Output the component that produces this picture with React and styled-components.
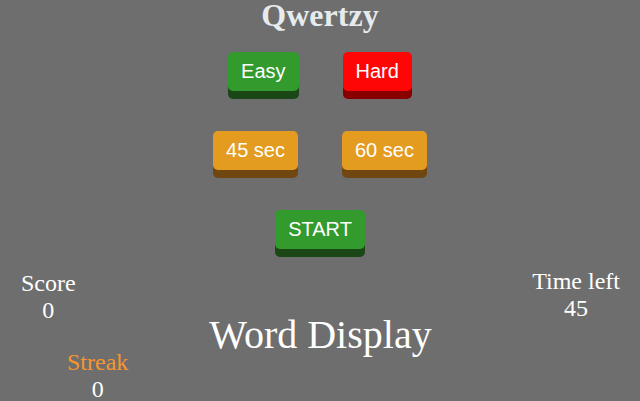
import styled, { createGlobalStyle } from "styled-components";

const GlobalStyle = createGlobalStyle`
  html, body {
    margin: 0;
    padding: 0;
    background-color: #6e6e6e;
  }
  body {
    font-family: "Liberation Serif", "Times New Roman", serif;
    color: #ffffff;
    overflow: hidden;
  }
`;

const Page = styled.div`
  width: 640px;
  height: 401px;
  overflow: hidden;
`;

const Title = styled.h1`
  margin: 0;
  font-size: 32px;
  line-height: 30px;
  font-weight: bold;
  text-align: center;
  color: #e6ebee;
`;

const ButtonRow = styled.div`
  display: flex;
  justify-content: center;
  gap: 44px;
  margin-top: ${(p) => p.$top || 40}px;
`;

const shades = {
  green: ["#339a2d", "#1b4716"],
  red: ["#ff0606", "#880000"],
  orange: ["#e39c1f", "#714711"],
};

const Button = styled.button`
  height: 39px;
  padding: 0 13px;
  border: none;
  border-radius: 5px;
  background-color: ${(p) => shades[p.$color][0]};
  box-shadow: 0 8px 0 ${(p) => shades[p.$color][1]};
  color: #ffffff;
  font-family: "Liberation Sans", Arial, sans-serif;
  font-size: 20px;
  cursor: pointer;
`;

const Board = styled.div`
  display: grid;
  grid-template-columns: 1fr auto 1fr;
  align-items: start;
  margin-top: 19px;
  padding: 0 20px 0 21px;
`;

const LeftColumn = styled.div`
  display: flex;
  flex-direction: column;
  align-items: flex-start;
`;

const Stat = styled.div`
  font-size: 24px;
  text-align: center;
  color: ${(p) => p.$color || "#ffffff"};
  margin-top: ${(p) => p.$top || 0}px;
  margin-left: ${(p) => p.$left || 0}px;
`;

const Value = styled.div`
  color: #ffffff;
`;

const WordDisplay = styled.div`
  font-size: 40px;
  line-height: 46px;
  margin-top: 44px;
  white-space: nowrap;
`;

const RightColumn = styled.div`
  display: flex;
  justify-content: flex-end;
`;

export default function App() {
  return (
    <Page>
      <GlobalStyle />
      <Title>Qwertzy</Title>
      <ButtonRow $top={22}>
        <Button $color="green">Easy</Button>
        <Button $color="red">Hard</Button>
      </ButtonRow>
      <ButtonRow>
        <Button $color="orange">45 sec</Button>
        <Button $color="orange">60 sec</Button>
      </ButtonRow>
      <ButtonRow>
        <Button $color="green">START</Button>
      </ButtonRow>
      <Board>
        <LeftColumn>
          <Stat $top={2}>
            Score
            <Value>0</Value>
          </Stat>
          <Stat $color="#f7962d" $top={25} $left={46}>
            Streak
            <Value>0</Value>
          </Stat>
        </LeftColumn>
        <WordDisplay>Word Display</WordDisplay>
        <RightColumn>
          <Stat>
            Time left
            <Value>45</Value>
          </Stat>
        </RightColumn>
      </Board>
    </Page>
  );
}
